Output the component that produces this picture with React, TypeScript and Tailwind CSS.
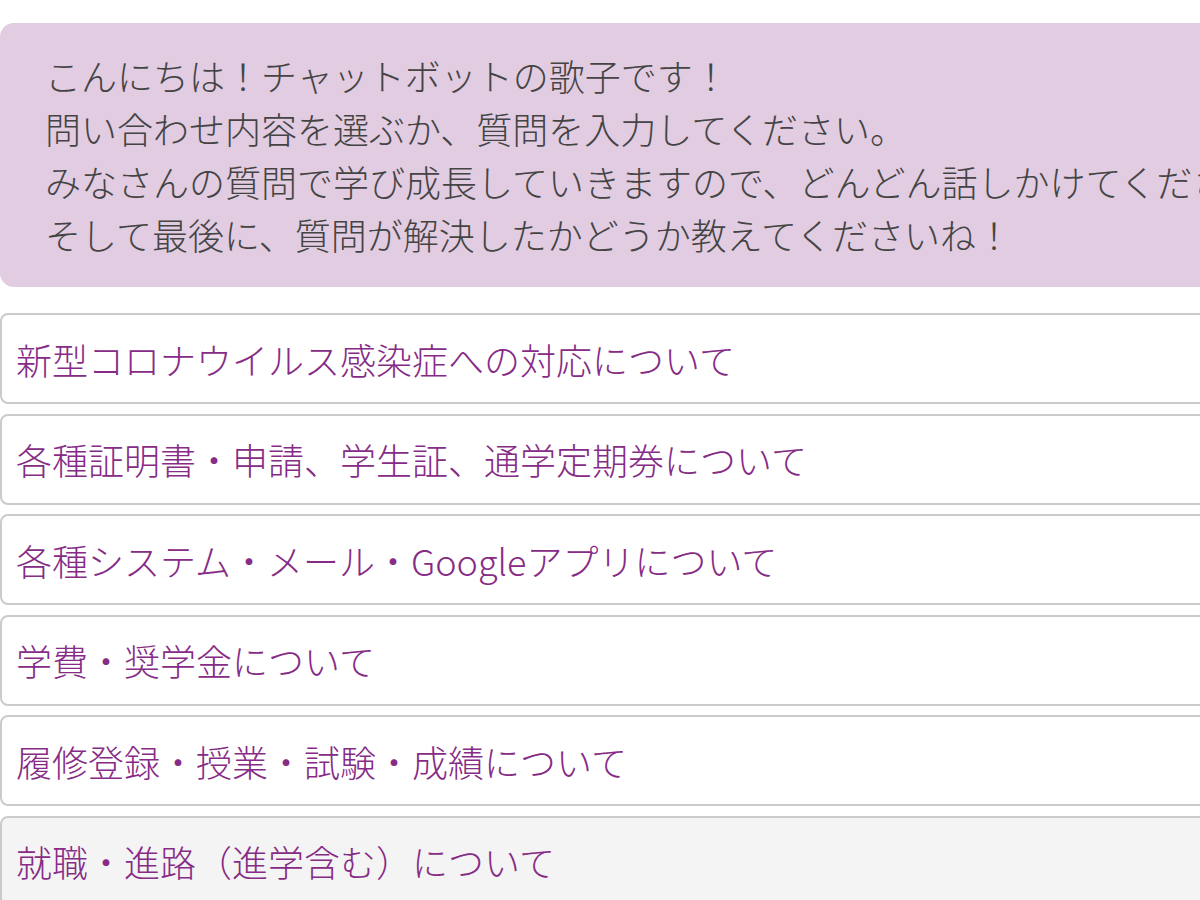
import React from "react";

const choices = [
  "新型コロナウイルス感染症への対応について",
  "各種証明書・申請、学生証、通学定期券について",
  "各種システム・メール・Googleアプリについて",
  "学費・奨学金について",
  "履修登録・授業・試験・成績について",
  "就職・進路（進学含む）について",
];

export default function App() {
  return (
    <div
      className="w-[1200px] h-[900px] overflow-hidden bg-white font-light"
      style={{ fontFamily: '"Noto Sans CJK JP", "Noto Sans", sans-serif' }}
    >
      <div className="w-[1320px] pt-[23px] flex flex-col">
        {/* Bot greeting bubble */}
        <div className="bg-[#e2cce1] rounded-[14px] pl-[45px] py-[26px] text-[36px] leading-[53px] text-[#444444] whitespace-nowrap">
          <p>こんにちは！チャットボットの歌子です！</p>
          <p>問い合わせ内容を選ぶか、質問を入力してください。</p>
          <p>みなさんの質問で学び成長していきますので、どんどん話しかけてください。</p>
          <p>そして最後に、質問が解決したかどうか教えてくださいね！</p>
        </div>

        {/* Choice buttons */}
        <div className="mt-[26px] flex flex-col gap-[9.6px]">
          {choices.map((c, i) => (
            <button
              key={c}
              className={`h-[91px] flex items-center pl-[14px] text-left border-2 border-[#cbcbcb] rounded-[8px] text-[36px] font-light text-[#862c86] whitespace-nowrap ${
                i === choices.length - 1 ? "bg-[#f4f4f4]" : "bg-white"
              }`}
            >
              {c}
            </button>
          ))}
        </div>
      </div>
    </div>
  );
}
